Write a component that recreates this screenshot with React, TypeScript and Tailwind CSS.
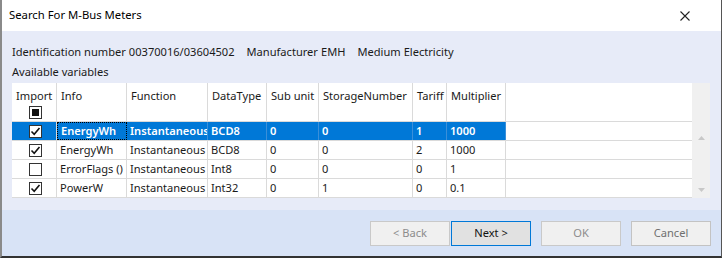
const cols = [45, 70, 81, 59, 52, 94, 34, 59];

const headers = ["Import", "Info", "Function", "DataType", "Sub unit", "StorageNumber", "Tariff", "Multiplier"];

const rows = [
  { checked: true, info: "EnergyWh", fn: "Instantaneous", type: "BCD8", sub: "0", storage: "0", tariff: "1", mult: "1000" },
  { checked: true, info: "EnergyWh", fn: "Instantaneous", type: "BCD8", sub: "0", storage: "0", tariff: "2", mult: "1000" },
  { checked: false, info: "ErrorFlags ()", fn: "Instantaneous", type: "Int8", sub: "0", storage: "0", tariff: "0", mult: "1" },
  { checked: true, info: "PowerW", fn: "Instantaneous", type: "Int32", sub: "0", storage: "1", tariff: "0", mult: "0.1" },
];

function CheckBox({ checked, indeterminate }: { checked?: boolean; indeterminate?: boolean }) {
  return (
    <div className="w-[13px] h-[13px] border border-[#333] bg-white flex items-center justify-center">
      {indeterminate && <div className="w-[7px] h-[7px] bg-[#111]" />}
      {checked && (
        <svg width="11" height="11" viewBox="0 0 11 11">
          <path d="M1.5 5.5 L4.2 8.2 L9.5 2" fill="none" stroke="#111" strokeWidth="1.6" />
        </svg>
      )}
    </div>
  );
}

function Button({ label, variant }: { label: string; variant: "disabled" | "focus" | "normal" }) {
  const cls =
    variant === "focus"
      ? "bg-[#e1e1e1] border-[#0078d7] text-[#111]"
      : variant === "normal"
        ? "bg-[#f0f0f0] border-[#c3c3c3] text-[#6f6f6f]"
        : "bg-[#f0f0f0] border-[#c9c9c9] text-[#8c8c8c]";
  return (
    <div className={`w-[80px] h-[25px] border flex items-center justify-center ${cls}`}>{label}</div>
  );
}

export default function App() {
  return (
    <div
      className="w-[722px] h-[260px] bg-white text-[11.1px] text-[#1a1a1a] overflow-hidden"
      style={{ fontFamily: '"Noto Sans", "Segoe UI", sans-serif' }}
    >
      <div className="w-[722px] h-[258px] border-l-2 border-r border-b-2 border-l-[#8a8a8a] border-r-[#555] border-b-[#333] flex flex-col">
        {/* title bar */}
        <div className="h-[31px] flex items-center justify-between pl-[7px] pr-[31px] bg-white">
          <span className="text-[11.3px] text-black">Search For M-Bus Meters</span>
          <svg width="10" height="10" viewBox="0 0 10 10">
            <path d="M0.5 0.5 L9.5 9.5 M9.5 0.5 L0.5 9.5" stroke="#222" strokeWidth="1.1" />
          </svg>
        </div>

        {/* content */}
        <div className="flex-1 bg-[#e7ebf8] pl-[10px] pt-[11px] flex flex-col">
          <div className="flex h-[20px] items-center whitespace-nowrap">
            <span>Identification number</span>
            <span className="ml-[3px]">00370016/03604502</span>
            <span className="ml-[12px]">Manufacturer</span>
            <span className="ml-[3px]">EMH</span>
            <span className="ml-[12px]">Medium</span>
            <span className="ml-[3px]">Electricity</span>
          </div>
          <div className="h-[20px] flex items-center">Available variables</div>

          <div className="flex mt-[1px]">
            <div className="w-[680px] bg-white">
              {/* header */}
              <div className="flex h-[39px] border-b border-[#dadada]">
                {headers.map((h, i) => (
                  <div
                    key={h}
                    style={{ width: cols[i] }}
                    className="border-r border-[#dadada] pl-[4px] pt-[5px] shrink-0 whitespace-nowrap overflow-hidden"
                  >
                    <div className="leading-[15px]">{h}</div>
                    {i === 0 && (
                      <div className="pl-[13px] pt-[3px]">
                        <CheckBox indeterminate />
                      </div>
                    )}
                  </div>
                ))}
                <div className="flex-1" />
              </div>
              {rows.map((r, ri) => {
                const sel = ri === 0;
                const vals = [r.info, r.fn, r.type, r.sub, r.storage, r.tariff, r.mult];
                return (
                  <div key={ri} className="flex h-[19px] border-b border-[#dadada]">
                    <div
                      className={`w-[45px] shrink-0 border-r border-[#dadada] flex items-center pl-[17px] ${sel ? "bg-[#0078d7]" : ""}`}
                    >
                      <CheckBox checked={r.checked} />
                    </div>
                    {vals.map((v, i) => (
                      <div
                        key={i}
                        style={{ width: cols[i + 1] }}
                        className={`shrink-0 flex items-center pl-[3px] whitespace-nowrap overflow-hidden ${
                          sel
                            ? `bg-[#0078d7] text-white font-semibold ${i === 0 ? "border border-dotted border-black" : "border-r border-[#3a8fd9]"}`
                            : "border-r border-[#dadada]"
                        }`}
                      >
                        {v}
                      </div>
                    ))}
                    <div className="flex-1" />
                  </div>
                );
              })}
            </div>
            <div className="w-[18px] h-[115px] bg-[#f0f0f0] flex flex-col items-center justify-end pb-[6px] gap-[48px]">
              <svg width="7" height="4" viewBox="0 0 7 4">
                <path d="M0 4 L3.5 0 L7 4 Z" fill="#c8c8c8" />
              </svg>
              <svg width="7" height="4" viewBox="0 0 7 4">
                <path d="M0 0 L3.5 4 L7 0 Z" fill="#c8c8c8" />
              </svg>
            </div>
          </div>
        </div>

        {/* footer */}
        <div className="h-[46px] bg-[#d8e3f6] flex items-center justify-end pr-[10px]">
          <Button label="< Back" variant="disabled" />
          <div className="ml-[1px]">
            <Button label="Next >" variant="focus" />
          </div>
          <div className="ml-[10px]">
            <Button label="OK" variant="disabled" />
          </div>
          <div className="ml-[10px]">
            <Button label="Cancel" variant="normal" />
          </div>
        </div>
      </div>
    </div>
  );
}
